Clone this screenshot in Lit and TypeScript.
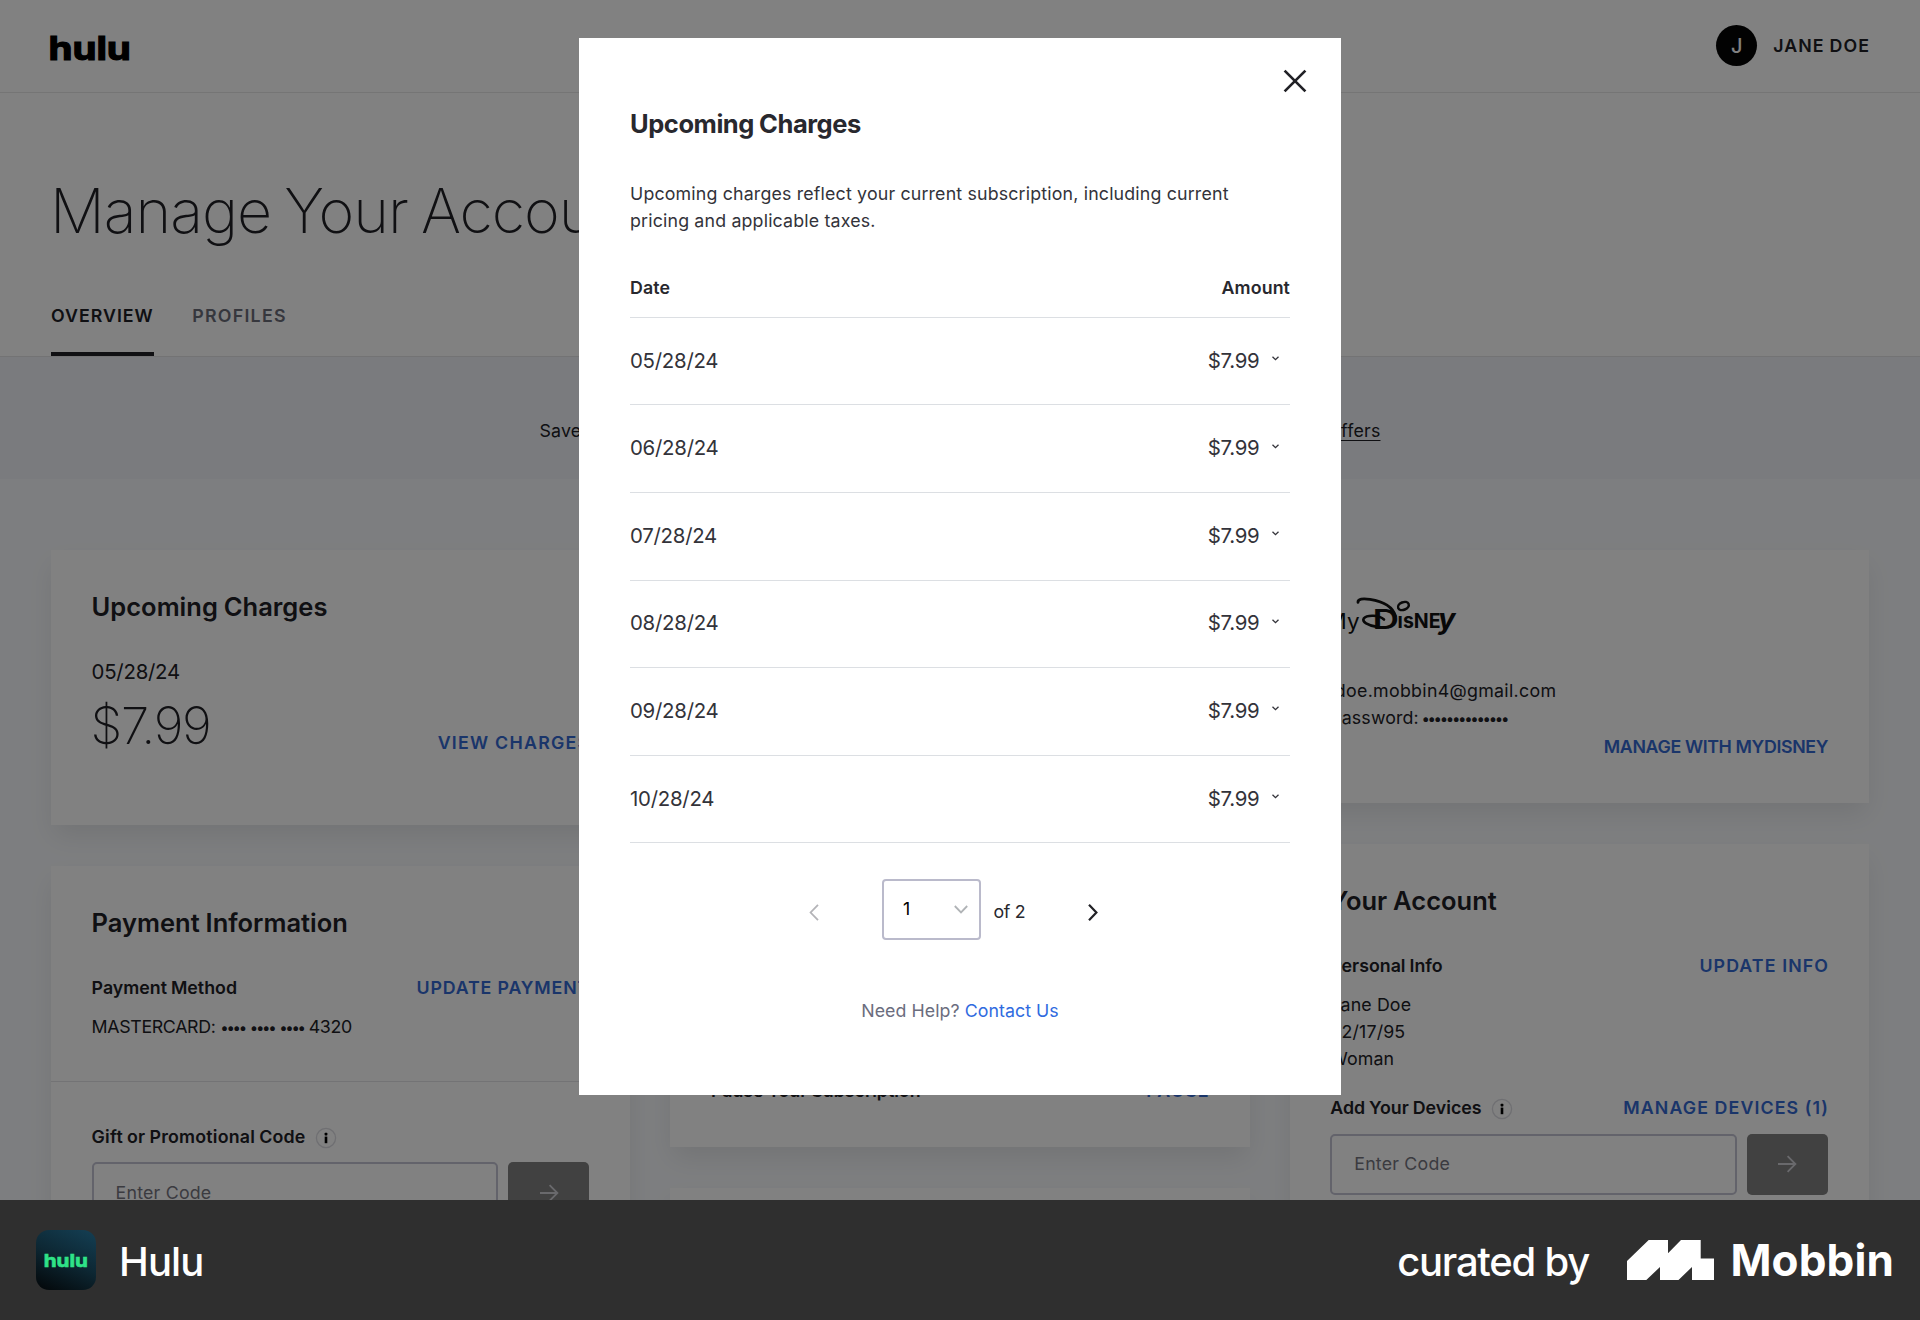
import { LitElement, html, svg, css } from "lit";
import { customElement, property } from "lit/decorators.js";

const CHARGES = ["05/28/24", "06/28/24", "07/28/24", "08/28/24", "09/28/24", "10/28/24"];

const type = css`
  .body { font-size: 17.8px; line-height: 27px; font-weight: 400; letter-spacing: 0.13px; }
  .strong { font-size: 17.8px; line-height: 27px; font-weight: 600; letter-spacing: 0; word-spacing: -0.5px; }
  .heading { font-size: 25.5px; line-height: 34px; font-weight: 600; letter-spacing: 0; word-spacing: -0.5px; margin: 0; }
  .link { font-size: 17.8px; line-height: 27px; font-weight: 600; letter-spacing: 1.1px; margin-right: -1.1px; color: #3469d2; white-space: nowrap; }
  .row { display: flex; justify-content: space-between; align-items: flex-end; }
  svg { display: block; flex: none; }
`;

const infoIcon = html`<svg width="22" height="22" viewBox="0 0 22 22">
  <circle cx="11" cy="11" r="9.6" fill="none" stroke="#dcdce2" stroke-width="1.3"/>
  <rect x="9.6" y="5.8" width="2.8" height="2.6" rx="0.6" fill="#000"/>
  <rect x="9.7" y="9.6" width="2.6" height="6.6" fill="#000"/>
</svg>`;

const huluMark = (w: number, h: number) => html`<svg width=${w} height=${h} viewBox="0 0 100 56">
  ${svg`<text x="8.4" y="40.2" font-family="Inter, sans-serif" font-weight="700" font-size="33.2" textLength="82.5" lengthAdjust="spacingAndGlyphs" fill="currentColor" stroke="currentColor" stroke-width="1.2">hulu</text>`}
</svg>`;

@customElement("code-field")
class CodeField extends LitElement {
  static styles = [type, css`
    :host { display: flex; gap: 10px; }
    .input { flex: 1; height: 61px; box-sizing: border-box; border: 2.5px solid #c3c3d3; border-radius: 5px; padding: 14.5px 22px 0; color: #75757f; letter-spacing: 0.2px; }
    .go { width: 81px; height: 61px; border-radius: 5px; background: #808080; display: flex; align-items: center; justify-content: center; }
  `];
  render() {
    return html`<div class="input body">Enter Code</div>
      <div class="go"><svg width="20" height="18" viewBox="0 0 20 18" fill="none" stroke="#d0d0d6" stroke-width="1.8"><path d="M1 9H18.4M10.6 1.2L18.4 9l-7.8 7.8"/></svg></div>`;
  }
}

@customElement("top-bar")
class TopBar extends LitElement {
  static styles = [type, css`
    :host { display: flex; justify-content: space-between; align-items: center; box-sizing: border-box; height: 93px; padding: 0 50px 1px 50px; border-bottom: 1.5px solid #e8e8e8; }
    .logo { color: #000; margin: 4px 0 0 -10px; }
    .user { display: flex; align-items: center; gap: 16px; }
    .avatar { width: 41px; height: 41px; border-radius: 50%; background: #040405; color: #fff; display: flex; align-items: center; justify-content: center; font-size: 20px; font-weight: 500; line-height: 38px; }
    .name { letter-spacing: 1.05px; }
  `];
  render() {
    return html`<div class="logo">${huluMark(100, 56)}</div>
      <div class="user"><div class="avatar">J</div><span class="strong name">JANE DOE</span></div>`;
  }
}

@customElement("page-hero")
class PageHero extends LitElement {
  static styles = [type, css`
    :host { display: block; height: 264px; box-sizing: border-box; padding: 81.5px 51px 0; border-bottom: 1.5px solid #e3e3e6; }
    h1 { margin: 0 0 55.5px -1px; font-size: 61px; line-height: 72px; font-weight: 250; letter-spacing: -1.02px; word-spacing: -3px; }
    .tabs { display: flex; gap: 38.5px; }
    .tab { font-size: 17.8px; line-height: 27px; font-weight: 600; letter-spacing: 1px; padding-bottom: 22.5px; border-bottom: 4px solid transparent; color: #6b6d7a; }
    .active { color: #212126; border-color: #212126; }
    .other { letter-spacing: 1.25px; }
  `];
  render() {
    return html`<h1>Manage Your Account</h1>
      <div class="tabs"><div class="tab active">OVERVIEW</div><div class="tab other">PROFILES</div></div>`;
  }
}

@customElement("mydisney-logo")
class MyDisneyLogo extends LitElement {
  static styles = css`:host { display: block; } svg { display: block; }`;
  render() {
    return html`<svg width="130" height="52" viewBox="0 0 130 52" fill="#111" font-family="Inter, sans-serif">
      <text x="-3.5" y="37" font-size="22" font-weight="400" textLength="33" lengthAdjust="spacingAndGlyphs">My</text>
      <text x="42.4" y="36.6" font-size="27" font-weight="600" textLength="26.5" lengthAdjust="spacingAndGlyphs">D</text>
      <g fill="none" stroke="#111" stroke-linecap="round">
        <path d="M28 10.4C27.6 6.8 33 6.2 40 7.4C51 9.2 62.5 13.5 65.4 24" stroke-width="2.8"/>
        <path d="M54 27.5C49 22.8 37 22.6 33.8 26.4C31.6 30 38 33.2 46 34.6" stroke-width="2.6"/>
        <ellipse cx="73.4" cy="14" rx="5.6" ry="3.8" transform="rotate(-22 73.4 14)" stroke-width="2.5"/>
      </g>
      <text x="67.6" y="36" font-size="20.5" font-weight="700" textLength="43" lengthAdjust="spacingAndGlyphs">ısNE</text>
      <text x="108" y="37" font-size="29" font-weight="700" font-style="italic" textLength="17.5" lengthAdjust="spacingAndGlyphs">y</text>
    </svg>`;
  }
}

@customElement("account-cards")
class AccountCards extends LitElement {
  static styles = [type, css`
    :host { display: flex; gap: 40px; padding: 71px 51px 0; background: #f8fafd; }
    .col { flex: 1; display: flex; flex-direction: column; gap: 41px; min-width: 0; }
    .card { background: #fff; box-sizing: border-box; padding: 39.7px 41px 0 40.6px; box-shadow: 0 13px 26px -3px rgba(0, 0, 0, 0.09); flex: none; }
    .charges { height: 275px; }
    .disney { height: 253px; }
    .plan { height: 597px; display: flex; flex-direction: column; justify-content: flex-end; padding-bottom: 43px; }
    .next { height: 200px; }
    .payment, .account { height: 420px; }
    .date { font-size: 20.4px; line-height: 28px; letter-spacing: -0.25px; margin-top: 34px; }
    .price { font-size: 51px; line-height: 60px; font-weight: 250; letter-spacing: -1.4px; margin: 10.7px 0 0 -1px; }
    .view { letter-spacing: 1.25px; }
    .update { letter-spacing: 0.85px; margin-right: -0.85px; }
    .spaced { margin-top: 34px; }
    .detail { margin-top: 12px; }
    .masked { letter-spacing: -0.35px; word-spacing: 0.3px; white-space: pre; }
    .dots { font-size: 15px; letter-spacing: -2.32px; }
    .pass { word-spacing: -2.6px; }
    .gift { letter-spacing: 0.2px; }
    .divider { height: 1.5px; background: #e3e3e8; margin: 40px -41px 40.7px; }
    .label { display: flex; gap: 9px; align-items: center; }
    .label svg { position: relative; top: 1.5px; }
    code-field { margin-top: 12.5px; }
    .devices { margin-top: 22.5px; }
    mydisney-logo { margin-top: 2.5px; }
    .email { margin-top: 32.7px; letter-spacing: 0.3px; }
    .manage { letter-spacing: -0.37px; margin: 1.3px 0 0; text-align: right; }
  `];
  render() {
    return html`
      <div class="col">
        <section class="card charges">
          <h2 class="heading">Upcoming Charges</h2>
          <div class="date">05/28/24</div>
          <div class="row"><div class="price">$7.99</div><a class="link view">VIEW CHARGES</a></div>
        </section>
        <section class="card payment">
          <h2 class="heading">Payment Information</h2>
          <div class="row spaced"><span class="strong">Payment Method</span><a class="link update">UPDATE PAYMENT</a></div>
          <div class="body detail masked">MASTERCARD: <span class="dots">••••</span> <span class="dots">••••</span> <span class="dots">••••</span> 4320</div>
          <div class="divider"></div>
          <div class="label strong gift">Gift or Promotional Code ${infoIcon}</div>
          <code-field></code-field>
        </section>
      </div>
      <div class="col">
        <section class="card plan">
          <div class="row"><span class="strong">Pause Your Subscription</span><a class="link">PAUSE</a></div>
        </section>
        <section class="card next"></section>
      </div>
      <div class="col">
        <section class="card disney">
          <mydisney-logo></mydisney-logo>
          <div class="body email">jdoe.mobbin4@gmail.com</div>
          <div class="body pass">Password: <span class="dots">••••••••••••••</span></div>
          <div class="link manage">MANAGE WITH MYDISNEY</div>
        </section>
        <section class="card account">
          <h2 class="heading">Your Account</h2>
          <div class="row spaced"><span class="strong">Personal Info</span><a class="link">UPDATE INFO</a></div>
          <div class="body detail">Jane Doe<br>02/17/95<br>Woman</div>
          <div class="row devices"><span class="label strong">Add Your Devices ${infoIcon}</span><a class="link">MANAGE DEVICES (1)</a></div>
          <code-field></code-field>
        </section>
      </div>`;
  }
}

@customElement("charges-dialog")
class ChargesDialog extends LitElement {
  @property({ attribute: false }) dates: string[] = CHARGES;
  static styles = [type, css`
    :host { display: block; box-sizing: border-box; width: 762px; height: 1057px; padding: 69.4px 51px 0; background: #fff; color: #28282e; }
    .close { position: absolute; right: 34px; top: 31px; }
    h2.heading { font-weight: 700; letter-spacing: -0.45px; word-spacing: -0.5px; }
    .intro { margin: 39.9px 0 0; line-height: 26.6px; letter-spacing: 0.165px; color: #33333a; }
    .head { margin-top: 39.4px; padding-bottom: 15.9px; border-bottom: 1.5px solid #dcdfe3; }
    .head span { font-size: 17.8px; line-height: 27px; font-weight: 600; letter-spacing: 0.1px; }
    .charge { display: flex; align-items: center; box-sizing: border-box; height: 87.6px; padding-bottom: 1px; border-bottom: 1.4px solid #dcdfe3; font-size: 20.4px; line-height: 28px; color: #33333a; letter-spacing: -0.25px; }
    .amount { margin-left: auto; }
    .charge svg { margin: 0 11.5px 4px 12px; }
    .pager { display: flex; align-items: center; margin: 35.8px 0 0 179px; height: 60px; }
    .select { display: flex; align-items: center; justify-content: space-between; box-sizing: border-box; width: 98.5px; height: 61px; margin: 0 13px 0 63px; padding: 0 11px 2px 19px; border: 2.6px solid #babacb; border-radius: 4px; color: #000; }
    .select svg { margin-top: 3px; }
    .of { letter-spacing: -0.3px; padding-top: 4px; }
    .arrow { margin-top: 6px; }
    .nextp { margin-left: 63px; }
    .help { margin-top: 57.5px; text-align: center; color: #6b6d7e; letter-spacing: 0.05px; }
    .help a { color: #2f6bdf; }
  `];
  render() {
    return html`
      <svg class="close" width="24" height="24" viewBox="0 0 24 24" stroke="#212126" stroke-width="2.7" fill="none"><path d="M1.6 1.6L22.4 22.4M22.4 1.6L1.6 22.4"/></svg>
      <h2 class="heading">Upcoming Charges</h2>
      <p class="body intro">Upcoming charges reflect your current subscription, including current<br>pricing and applicable taxes.</p>
      <div class="row head"><span>Date</span><span>Amount</span></div>
      ${this.dates.map(d => html`<div class="charge"><span>${d}</span><span class="amount">$7.99</span>
        <svg width="7" height="5" viewBox="0 0 7 5" fill="none" stroke="#33333a" stroke-width="1.3"><path d="M.5 .7L3.5 3.7l3-3"/></svg></div>`)}
      <div class="pager">
        <svg class="arrow" width="10" height="17" viewBox="0 0 10 17" fill="none" stroke="#b4b4b8" stroke-width="1.8"><path d="M9 .8L1.6 8.5L9 16.2"/></svg>
        <div class="select body"><span>1</span><svg width="14" height="9" viewBox="0 0 14 9" fill="none" stroke="#b0b3b6" stroke-width="1.8"><path d="M.8 1l6.2 6.4L13.2 1"/></svg></div>
        <span class="body of">of 2</span>
        <svg class="arrow nextp" width="10" height="17" viewBox="0 0 10 17" fill="none" stroke="#212126" stroke-width="2.2"><path d="M1 .8l7.4 7.7L1 16.2"/></svg>
      </div>
      <div class="body help">Need Help? <a>Contact Us</a></div>`;
  }
}

@customElement("credit-bar")
class CreditBar extends LitElement {
  static styles = css`
    :host { display: flex; align-items: center; height: 120px; box-sizing: border-box; padding: 0 26px 0 36px; background: #2f2f2f; color: #fff; font-size: 40px; line-height: 48px; font-weight: 550; }
    svg { display: block; flex: none; }
    .app { width: 60px; height: 60px; border-radius: 13px; display: flex; align-items: center; justify-content: center; color: #2fe388; background: linear-gradient(205deg, #143f54 0%, #0d2733 50%, #030608 100%); }
    .name { margin: 3px 0 0 23px; letter-spacing: -0.9px; }
    .by { margin: 3px 0 0 auto; letter-spacing: -1.25px; }
    .mark { margin-left: 38px; }
    .brand { font-size: 44px; font-weight: 700; margin-left: 16.5px; letter-spacing: 0.13px; }
  `;
  render() {
    return html`<div class="app">${huluMark(54, 30)}</div>
      <span class="name">Hulu</span>
      <span class="by">curated by</span>
      <svg class="mark" width="87" height="40" viewBox="0 0 87 40" fill="#fff"><path d="M0 21L21.7 0H41V13.3L54 0H73.7V18.5H87V40H65V27L51.5 40H33V27L19.3 40H0Z"/></svg>
      <span class="brand">Mobbin</span>`;
  }
}

@customElement("app-root")
class AppRoot extends LitElement {
  static styles = [type, css`
    :host { display: block; width: 1920px; height: 1320px; overflow: hidden; font-family: Inter, "Liberation Sans", sans-serif; color: #212126; background: #fff; }
    .screen { position: relative; height: 1200px; overflow: hidden; }
    .banner { box-sizing: border-box; height: 122px; padding-top: 60px; background: #f2f4f9; }
    .offer { display: flex; justify-content: space-between; width: 841px; margin: 0 auto; }
    .offer a { letter-spacing: 0.2px; text-decoration: underline; text-underline-offset: 3px; text-decoration-thickness: 1.4px; }
    .scrim { position: absolute; inset: 0; background: rgba(0, 0, 0, 0.494); }
    charges-dialog { position: absolute; left: 579px; top: 38px; }
  `];
  render() {
    return html`
      <div class="screen">
        <top-bar></top-bar>
        <page-hero></page-hero>
        <div class="banner"><div class="offer body"><span>Save</span><a>Offers</a></div></div>
        <account-cards></account-cards>
        <div class="scrim"></div>
        <charges-dialog></charges-dialog>
      </div>
      <credit-bar></credit-bar>`;
  }
}
